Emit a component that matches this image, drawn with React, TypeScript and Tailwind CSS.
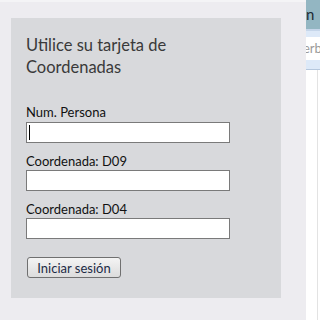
import React from "react";

export default function App() {
  const font = { fontFamily: "Lato, 'Open Sans', sans-serif" };
  return (
    <div className="w-[320px] h-[320px] flex overflow-hidden" style={font}>
      <div className="w-[306px] h-full bg-[#edecf0] flex flex-col">
        <div className="h-[2px] bg-[#f4f4f6]" />
        <div className="ml-[11px] mt-[16px] w-[270px] h-[280px] bg-[#d8d9dc] pl-[15px] pt-[16px] flex flex-col">
          <div className="text-[16.5px] leading-[22px] text-[#3a3a3a] w-[200px]">
            Utilice su tarjeta de Coordenadas
          </div>
          <div className="mt-[26px] flex flex-col">
            <label className="text-[13px] leading-[16px] text-[#111]">Num. Persona</label>
            <div className="mt-[2px] w-[204px] h-[21px] bg-white border border-[#7a7a7a] flex items-center pl-[2px]">
              <div className="w-[1px] h-[15px] bg-black" />
            </div>
            <label className="mt-[10px] text-[13px] leading-[16px] text-[#111]">Coordenada: D09</label>
            <div className="mt-[1px] w-[204px] h-[21px] bg-white border border-[#7a7a7a]" />
            <label className="mt-[10px] text-[13px] leading-[16px] text-[#111]">Coordenada: D04</label>
            <div className="mt-[1px] w-[204px] h-[21px] bg-white border border-[#7a7a7a]" />
            <button className="mt-[18px] ml-[1px] w-[94px] h-[21px] rounded-[3px] border border-[#707070] bg-gradient-to-b from-[#f4f4f4] to-[#dcdcdc] text-[13px] leading-[16px] text-[#1c2b45] flex items-center justify-center">
              Iniciar sesión
            </button>
          </div>
        </div>
      </div>
      <div className="w-[14px] h-full flex flex-col overflow-hidden bg-white">
        <div className="h-[29px] bg-[#93b6c2] flex items-center overflow-hidden">
          <span className="text-[15px] text-[#1e2a33] whitespace-nowrap">n</span>
        </div>
        <div className="h-[2px] bg-[#c6d6ea]" />
        <div className="h-[6px] bg-[#dde9f8]" />
        <div className="h-[23px] bg-white flex items-center overflow-hidden">
          <span className="text-[13px] text-[#9a9a9a] -ml-[3px] whitespace-nowrap">erb</span>
        </div>
        <div className="h-[9px] bg-[#dde9f8]" />
        <div className="h-[1px] bg-[#b5c7dd]" />
        <div className="flex-1 flex">
          <div className="w-[11px]" />
          <div className="w-[1px] bg-[#e3e3e3]" />
        </div>
      </div>
    </div>
  );
}
